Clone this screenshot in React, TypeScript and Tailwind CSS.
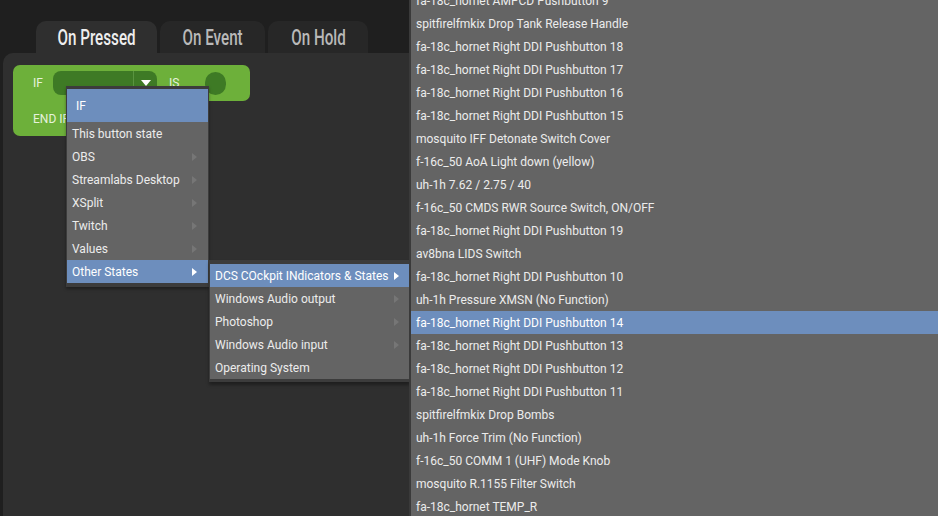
import React from 'react';

const MAIN_ITEMS: Array<{ label: string; sub: boolean }> = [
  { label: 'This button state', sub: false },
  { label: 'OBS', sub: true },
  { label: 'Streamlabs Desktop', sub: true },
  { label: 'XSplit', sub: true },
  { label: 'Twitch', sub: true },
  { label: 'Values', sub: true },
  { label: 'Other States', sub: true },
];

const SUB_ITEMS: Array<{ label: string; sub: boolean }> = [
  { label: 'DCS COckpit INdicators & States', sub: true },
  { label: 'Windows Audio output', sub: true },
  { label: 'Photoshop', sub: true },
  { label: 'Windows Audio input', sub: true },
  { label: 'Operating System', sub: false },
];

const STATES = [
  'fa-18c_hornet AMPCD Pushbutton 9',
  'spitfirelfmkix Drop Tank Release Handle',
  'fa-18c_hornet Right DDI Pushbutton 18',
  'fa-18c_hornet Right DDI Pushbutton 17',
  'fa-18c_hornet Right DDI Pushbutton 16',
  'fa-18c_hornet Right DDI Pushbutton 15',
  'mosquito IFF Detonate Switch Cover',
  'f-16c_50 AoA Light down (yellow)',
  'uh-1h 7.62 / 2.75 / 40',
  'f-16c_50 CMDS RWR Source Switch, ON/OFF',
  'fa-18c_hornet Right DDI Pushbutton 19',
  'av8bna LIDS Switch',
  'fa-18c_hornet Right DDI Pushbutton 10',
  'uh-1h Pressure XMSN (No Function)',
  'fa-18c_hornet Right DDI Pushbutton 14',
  'fa-18c_hornet Right DDI Pushbutton 13',
  'fa-18c_hornet Right DDI Pushbutton 12',
  'fa-18c_hornet Right DDI Pushbutton 11',
  'spitfirelfmkix Drop Bombs',
  'uh-1h Force Trim (No Function)',
  'f-16c_50 COMM 1 (UHF) Mode Knob',
  'mosquito R.1155 Filter Switch',
  'fa-18c_hornet TEMP_R',
];

// small right-pointing caret used for submenus
function Caret({ active }: { active: boolean }) {
  return (
    <svg width="5" height="8" viewBox="0 0 5 8" className="shrink-0">
      <path d="M0 0 L5 4 L0 8 Z" fill={active ? '#ffffff' : '#767676'} />
    </svg>
  );
}

function MenuRow({ label, sub, active }: { label: string; sub: boolean; active: boolean }) {
  return (
    <div
      className={`h-[23px] flex items-center justify-between pl-[5px] pr-[11px] whitespace-nowrap ${
        active ? 'bg-[#6d8ebd] text-white' : 'bg-[#646464] text-[#ececec]'
      }`}
    >
      <span>{label}</span>
      {sub && <Caret active={active} />}
    </div>
  );
}

// tab label, squeezed horizontally to look like the condensed face in the app
function TabLabel({ text, active }: { text: string; active: boolean }) {
  return (
    <span
      className={`inline-block whitespace-nowrap text-[22px] font-medium leading-none scale-x-[0.69] ${
        active ? 'text-[#eeeeee]' : 'text-[#b9b9b9]'
      }`}
    >
      {text}
    </span>
  );
}

export default function App() {
  return (
    <div
      className="relative w-[938px] h-[516px] overflow-hidden bg-[#1f1f1f] text-[12px]"
      style={{ fontFamily: 'Roboto, "Noto Sans", sans-serif' }}
    >
      {/* Tabs */}
      <div className="flex gap-[3px] pl-[36px] pt-[21px]">
        <div className="w-[121px] h-[32px] rounded-t-[10px] bg-[#2f2f2f] flex items-center justify-center pt-[2px]">
          <TabLabel text="On Pressed" active />
        </div>
        <div className="w-[105px] h-[32px] rounded-t-[10px] bg-[#272727] flex items-center justify-center pt-[2px]">
          <TabLabel text="On Event" active={false} />
        </div>
        <div className="w-[100px] h-[32px] rounded-t-[10px] bg-[#272727] flex items-center justify-center pt-[2px]">
          <TabLabel text="On Hold" active={false} />
        </div>
      </div>

      {/* Editor panel */}
      <div className="ml-[3px] h-[463px] rounded-tl-[10px] bg-[#2f2f2f] pl-[10px] pt-[12px]">
        <div className="flex flex-col">
          <div className="w-[237px] h-[36px] bg-[#6db03a] rounded-t-[7px] rounded-br-[7px] flex items-center pl-[20px] text-[#e6f2dc]">
            <span className="w-[20px]">IF</span>
            <div className="w-[104px] h-[24px] rounded-[8px] bg-[#3e7a25] flex">
              <div className="w-[81px] border-r border-[#5a9440]" />
              <div className="flex-1 flex items-center justify-center">
                <svg width="10" height="6" viewBox="0 0 10 6">
                  <path d="M0 0 H10 L5 6 Z" fill="#ffffff" />
                </svg>
              </div>
            </div>
            <span className="ml-[12px] w-[36px]">IS</span>
            <div className="w-[21px] h-[23px] rounded-full bg-[#3e7a25]" />
          </div>
          <div className="w-[110px] h-[35px] bg-[#6db03a] rounded-b-[7px] flex items-center pl-[20px] text-[#e6f2dc]">
            END IF
          </div>
        </div>
      </div>

      {/* Main dropdown menu */}
      <div className="absolute left-[66px] top-[86px] w-[143px] bg-[#3c3c3c] pt-[3px] pb-[4px] px-px shadow-[0_2px_3px_rgba(0,0,0,0.35)]">
        <div className="h-[33px] bg-[#6d8ebd] flex items-center pl-[9px] text-white">IF</div>
        {MAIN_ITEMS.map((it) => (
          <MenuRow key={it.label} label={it.label} sub={it.sub} active={it.label === 'Other States'} />
        ))}
      </div>

      {/* Submenu */}
      <div className="absolute left-[209px] top-[260px] w-[201px] bg-[#3c3c3c] pt-[4px] pb-[3px] pl-px shadow-[0_3px_3px_rgba(0,0,0,0.35)]">
        {SUB_ITEMS.map((it, i) => (
          <MenuRow key={it.label} label={it.label} sub={it.sub} active={i === 0} />
        ))}
      </div>

      {/* State list (scrolled) */}
      <div className="absolute left-[409px] top-0 right-0 bottom-0 overflow-hidden border-l-2 border-[#3a3a3a] bg-[#646464]">
        <div className="-mt-[11px]">
          {STATES.map((s, i) => (
            <div
              key={i}
              className={`h-[23px] flex items-center pl-[5px] whitespace-nowrap ${
                i === 14 ? 'bg-[#6d8ebd] text-white' : 'text-[#ececec]'
              }`}
            >
              {s}
            </div>
          ))}
        </div>
      </div>
    </div>
  );
}
